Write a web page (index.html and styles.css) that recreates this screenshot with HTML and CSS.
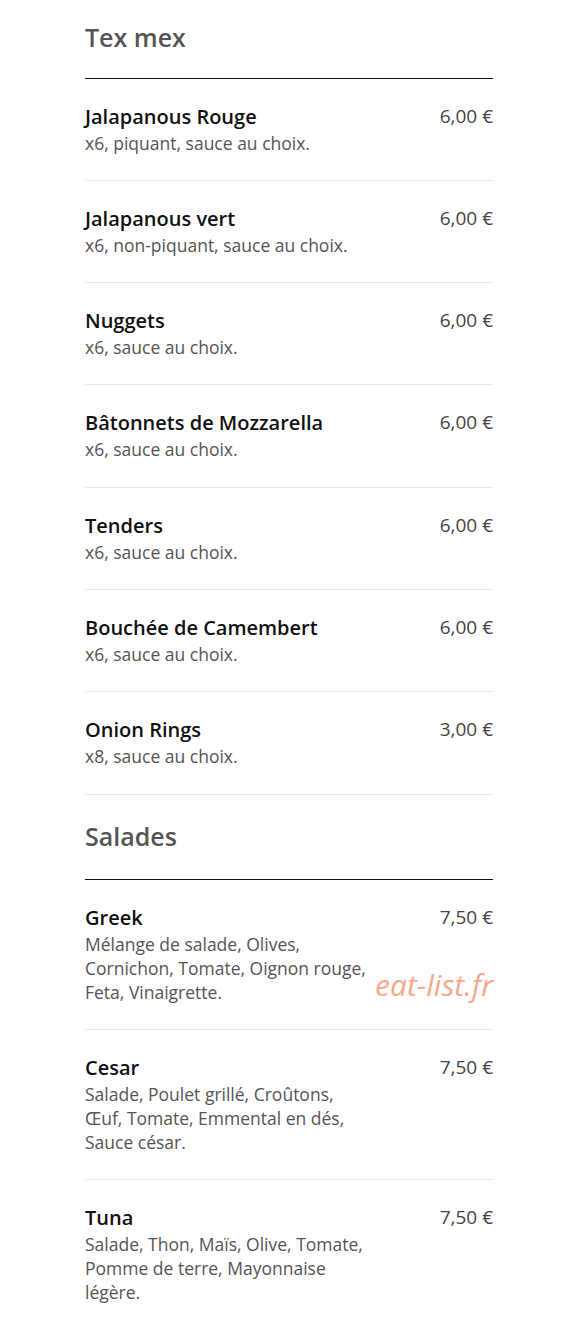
FILE: index.html
```html
<!DOCTYPE html>
<html lang="fr">
<head>
    <meta charset="UTF-8">
    <meta name="viewport" content="width=device-width, initial-scale=1.0">
    <title>Carte - Tex mex et Salades</title>
    <link rel="stylesheet" href="styles.css">
</head>
<body>

    <div class="carte">

        <!-- Tex mex -->
        <section class="categorie">
            <h2 class="categorie-titre">Tex mex</h2>

            <div class="plat">
                <div class="plat-infos">
                    <h3>Jalapanous Rouge</h3>
                    <p>x6, piquant, sauce au choix.</p>
                </div>
                <span class="prix">6,00 €</span>
            </div>

            <div class="plat">
                <div class="plat-infos">
                    <h3>Jalapanous vert</h3>
                    <p>x6, non-piquant, sauce au choix.</p>
                </div>
                <span class="prix">6,00 €</span>
            </div>

            <div class="plat">
                <div class="plat-infos">
                    <h3>Nuggets</h3>
                    <p>x6, sauce au choix.</p>
                </div>
                <span class="prix">6,00 €</span>
            </div>

            <div class="plat">
                <div class="plat-infos">
                    <h3>Bâtonnets de Mozzarella</h3>
                    <p>x6, sauce au choix.</p>
                </div>
                <span class="prix">6,00 €</span>
            </div>

            <div class="plat">
                <div class="plat-infos">
                    <h3>Tenders</h3>
                    <p>x6, sauce au choix.</p>
                </div>
                <span class="prix">6,00 €</span>
            </div>

            <div class="plat">
                <div class="plat-infos">
                    <h3>Bouchée de Camembert</h3>
                    <p>x6, sauce au choix.</p>
                </div>
                <span class="prix">6,00 €</span>
            </div>

            <div class="plat">
                <div class="plat-infos">
                    <h3>Onion Rings</h3>
                    <p>x8, sauce au choix.</p>
                </div>
                <span class="prix">3,00 €</span>
            </div>
        </section>

        <!-- Salades -->
        <section class="categorie">
            <h2 class="categorie-titre">Salades</h2>

            <div class="plat">
                <div class="plat-infos">
                    <h3>Greek</h3>
                    <p>Mélange de salade, Olives, Cornichon, Tomate, Oignon rouge, Feta, Vinaigrette.</p>
                </div>
                <span class="prix">7,50 €</span>
                <span class="filigrane">eat-list.fr</span>
            </div>

            <div class="plat">
                <div class="plat-infos">
                    <h3>Cesar</h3>
                    <p>Salade, Poulet grillé, Croûtons, Œuf, Tomate, Emmental en dés, Sauce césar.</p>
                </div>
                <span class="prix">7,50 €</span>
            </div>

            <div class="plat">
                <div class="plat-infos">
                    <h3>Tuna</h3>
                    <p>Salade, Thon, Maïs, Olive, Tomate, Pomme de terre, Mayonnaise légère.</p>
                </div>
                <span class="prix">7,50 €</span>
            </div>
        </section>

    </div>

</body>
</html>
```

FILE: styles.css
```css
body {
    font-family: 'Open Sans', 'Liberation Sans', Arial, sans-serif;
    background-color: #fff;
    margin: 0;
    padding: 0;
    color: #555;
}

.carte {
    width: 408px;
    margin: 0 auto 0 85px;
}

.categorie-titre {
    margin: 0;
    padding: 23px 0 25px;
    font-size: 25px;
    line-height: 36px;
    font-weight: 600;
    color: #555;
    border-bottom: 1px solid #111;
}

.categorie:first-child .categorie-titre {
    padding: 19px 0 22.5px;
}

.plat {
    position: relative;
    display: flex;
    justify-content: space-between;
    align-items: flex-start;
    padding: 24px 0 25.3px;
    border-bottom: 1px solid #e6e6e6;
}

.categorie:last-child .plat:last-child {
    border-bottom: none;
}

.plat-infos {
    width: 70%;
}

.plat-infos h3 {
    margin: 0;
    font-size: 20px;
    line-height: 28px;
    font-weight: 600;
    color: #111;
}

.plat-infos p {
    margin: 0;
    font-size: 17.5px;
    line-height: 24px;
    color: #555;
}

.prix {
    font-size: 19px;
    line-height: 26px;
    font-weight: 500;
    color: #444;
    white-space: nowrap;
}

/* Filigrane par-dessus la fiche */
.filigrane {
    position: absolute;
    right: 0;
    bottom: 26px;
    font-size: 30px;
    line-height: 36px;
    font-style: italic;
    color: #f4a98a;
}
```
